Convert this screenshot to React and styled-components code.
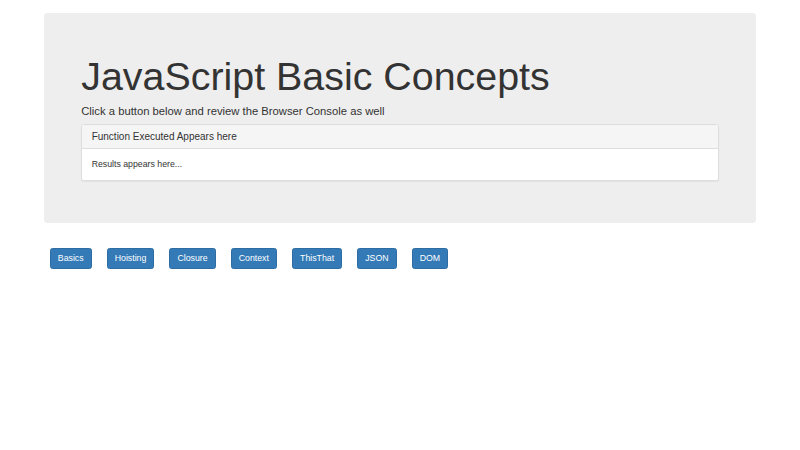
import React from "react";
import styled, { createGlobalStyle } from "styled-components";

const GlobalStyle = createGlobalStyle`
  html, body {
    margin: 0;
    padding: 0;
    background: #ffffff;
  }
  body {
    font-family: "Liberation Sans", Arial, Helvetica, sans-serif;
    font-size: 8.75px;
    line-height: 1.42857;
    color: #333333;
  }
`;

const buttons = ["Basics", "Hoisting", "Closure", "Context", "ThisThat", "JSON", "DOM"];

const App = () => {
  return (
    <>
      <GlobalStyle />
      <Container>
        <Jumbotron>
          <Title>JavaScript Basic Concepts</Title>
          <Lead>Click a button below and review the Browser Console as well</Lead>
          <Panel>
            <PanelHeading>
              <PanelTitle>Function Executed Appears here</PanelTitle>
            </PanelHeading>
            <PanelBody>Results appears here...</PanelBody>
          </Panel>
        </Jumbotron>
        <ButtonRow>
          {buttons.map((label) => (
            <Button key={label} type="button">
              {label}
            </Button>
          ))}
        </ButtonRow>
      </Container>
    </>
  );
};

export default App;

//CSS
const Container = styled.div`
  width: 712.5px;
  margin: 12.5px auto 0;
`;

const Jumbotron = styled.div`
  background-color: #eeeeee;
  border-radius: 3.75px;
  padding: 30px 37.5px;
`;

const Title = styled.h1`
  margin: 12.5px 0 4.5px;
  font-size: 39.4px;
  font-weight: 500;
  line-height: 1.1;
  color: #333333;
`;

const Lead = styled.h4`
  margin: 4.5px 0 5.2px;
  font-size: 11.25px;
  line-height: 16px;
  font-weight: 400;
  color: #333333;
`;

const Panel = styled.div`
  background: #ffffff;
  border: 1px solid #dddddd;
  border-radius: 2.5px;
  margin-bottom: 11.5px;
  box-shadow: 0 1px 1px rgba(0, 0, 0, 0.05);
`;

const PanelHeading = styled.div`
  background: #f5f5f5;
  border-bottom: 1px solid #dddddd;
  border-radius: 2px 2px 0 0;
  padding: 6px 9.4px;
`;

const PanelTitle = styled.h3`
  margin: 0;
  font-size: 10px;
  font-weight: 400;
  line-height: 1.1;
  color: #333333;
`;

const PanelBody = styled.div`
  padding: 9.4px;
  font-size: 8.75px;
  line-height: 12.5px;
`;

const ButtonRow = styled.div`
  display: flex;
  gap: 15px;
  margin-top: 25px;
  padding-left: 6px;
`;

const Button = styled.button`
  font-family: inherit;
  font-size: 8.75px;
  line-height: 1.42857;
  padding: 3.5px 7.07px;
  color: #ffffff;
  background-color: #337ab7;
  border: 1px solid #2e6da4;
  border-radius: 2.5px;
  cursor: pointer;
`;
